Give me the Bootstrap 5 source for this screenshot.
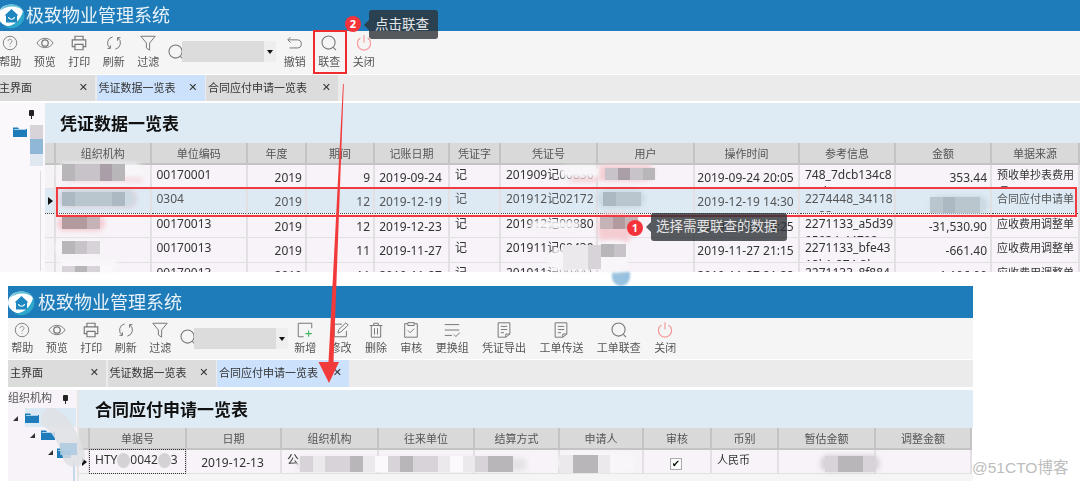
<!DOCTYPE html>
<html lang="zh-CN">
<head>
<meta charset="utf-8">
<title>极致物业管理系统</title>
<link href="https://cdn.jsdelivr.net/npm/bootstrap@5.3.0/dist/css/bootstrap.min.css" rel="stylesheet">
<style>
html,body{margin:0;height:486px;overflow:hidden;background:#fff}
body{font-family:"Noto Sans","Noto Sans CJK SC",sans-serif;font-size:11px;color:#333;position:relative}
.win{position:absolute;overflow:hidden;background:#fff;filter:blur(.35px)}
.win-a{left:-3px;top:0;width:1083px;height:272px}
.win-b{left:8px;top:286px;width:965px;height:195px}
.ttl{height:32px;background:#1e7cba;color:#e8f2f8;font-size:18px;padding-left:3px;gap:1px}
.win-b .ttl{padding-left:0;gap:3px}
.logo{width:27px;height:27px;flex:none}
.win-a .ttl{height:31px}
.win-a .logo{margin-left:-2px}
.tb{height:43px;background:#f5f5f5;margin-bottom:1px}
.win-a .tb{padding-left:0}
.win-a .tb>:first-child{margin-left:-4px}
.win-b .tb>:first-child{margin-left:-3px}
.win-b .tb{height:41px}
.ti{width:34.5px;flex:none;padding-top:3px;color:#555;line-height:14px;white-space:nowrap}
.ti svg{width:18px;height:18px;display:block;margin-bottom:3px}
.win-b .ti svg{margin-bottom:2px}
.tw{width:auto;padding-left:6.7px;padding-right:6.7px}
.ts{width:18px;height:18px;margin:12px -3px 0 1px;flex:none}
.win-b .ts{margin-top:10px}
.cb{width:94px;height:21px;background:#dcdcdc;margin:10px 2px 0 0;flex:none;justify-content:flex-end}
.win-b .cb{margin-right:0}
.cba{width:12px;background:#eee;color:#111}
.cba::before{content:"";border:3.5px solid transparent;border-top:4px solid #111;border-bottom:0}
.tabs{height:26px;background:#ebebeb;margin-bottom:2px;gap:1.5px}
.win-b .tabs{height:27px;margin-bottom:3px}
.tab1{background:#dcdcdc;height:100%;padding:0 7px 0 2px;color:#333}
.w1{width:98px}.w2{width:108px}.w3{width:132px}
.tab1.on{background:#cce1fb}
.xx{font-weight:700;font-size:11px;color:#333;font-family:"DejaVu Sans",sans-serif}
.bdy{height:170px}
.sd{width:48px;flex:none;background:#faf8fa;position:relative}
.win-b .sd{width:71px;background:#f7f3f8;border-right:2px solid #e6e6e6}
.mn{flex:1;min-width:0}
.hd{height:40px;background:#deebf5;color:#111;font-size:17px;font-weight:700;padding-left:15px;line-height:1}
.win-b .hd{height:38px;padding-left:16px}
.gt{table-layout:fixed;border-collapse:collapse;--bs-table-bg:transparent;width:auto}
.gt th{background:#d9d9d9;font-weight:400;color:#555;text-align:center;font-size:11px;height:21px;padding:0;border:1px solid #c3c3c3;border-width:0 2px 2px 0;line-height:19px;overflow:hidden}
.gt td{background:#f7f3f8;color:#333;padding:0;height:24.5px;border:1px solid #e2e0e2;border-width:0 2px 1.5px 0;overflow:hidden;vertical-align:top;font-size:12px}
.gt .rh{background:#f5f3f6;position:relative}
.gt tr.sel td{background:#ddeaf4;color:#555;border-bottom:1px dotted #444}
.ct{height:23px;overflow:hidden;padding:1px 0 0 5px;line-height:17px;white-space:normal;word-break:break-all}
.ctr{padding:4px 2px 0 0;text-align:center;line-height:17px;white-space:nowrap}
.num{padding:4px 3px 0 0;text-align:right;line-height:17px;white-space:nowrap}
.cjk{font-size:11px}
.gt-a col:nth-child(1){width:10px}.gt-a col:nth-child(2){width:95.5px}.gt-a col:nth-child(3){width:96.5px}
.gt-a col:nth-child(4){width:59px}.gt-a col:nth-child(5){width:68px}.gt-a col:nth-child(6){width:75px}
.gt-a col:nth-child(7){width:51px}.gt-a col:nth-child(8){width:97px}.gt-a col:nth-child(9){width:97px}
.gt-a col:nth-child(10){width:105px}.gt-a col:nth-child(11){width:96px}.gt-a col:nth-child(12){width:96px}.gt-a col:nth-child(13){width:88px}
.gt-b col:nth-child(1){width:10px}.gt-b col:nth-child(2){width:97px}.gt-b col:nth-child(3){width:95px}
.gt-b col:nth-child(4){width:97px}.gt-b col:nth-child(5){width:96px}.gt-b col:nth-child(6){width:85px}
.gt-b col:nth-child(7){width:84px}.gt-b col:nth-child(8){width:68px}.gt-b col:nth-child(9){width:67px}
.gt-b col:nth-child(10){width:97px}.gt-b col:nth-child(11){width:96px}
.ptr{position:absolute;left:3px;top:8px;border:4px solid transparent;border-left:5px solid #111;border-right:0}
.dots{outline:1px dotted #333;outline-offset:-1px}
.chk{width:12px;height:12px;border:1px solid #aaa;background:#fff;color:#111;font-size:10px;line-height:10px;display:inline-block;font-family:"DejaVu Sans",sans-serif}
.strip{height:7px;background:#f5f5f5}
.pin{position:absolute;width:5px;height:6px;background:#222;border-radius:1px}
.pin::after{content:"";position:absolute;left:2px;top:6px;width:1px;height:3px;background:#222}
.pa{left:32px;top:7px}
.pb{left:55px;top:5px}
.sdl{position:absolute;left:0;top:0;white-space:nowrap;color:#555;font-size:11px;line-height:15px}
.fold{position:absolute;width:14px;height:11px}
.fa{left:16px;top:23px}
.tri{position:absolute;border-style:solid;border-width:0 0 5px 5px;border-color:transparent transparent #333 transparent}
.t1{left:5px;top:26px}.t2{left:22px;top:43px}.t3{left:40px;top:60px}
.f1{left:17px;top:22px}.f2{left:33px;top:39px}.f3{left:49px;top:57px}
.trsel{position:absolute;left:17px;top:18px;width:51px;height:19px;background:#dbe9f5}
.sline{position:absolute;left:43px;top:68px;width:1px;height:100px;background:#ddd}
.sline2{position:absolute;left:65px;top:70px;width:2px;height:30px;background:#c5d8e8}
.mos{position:absolute;display:flex;z-index:3;filter:blur(.7px)}
.mos i{display:block;height:100%;width:12.5px;flex:none}
.halo{position:absolute;border-radius:10px;filter:blur(2px);z-index:2}
.g1{background:#b9b6b9}.g2{background:#c8c2c9}.g3{background:#aa9fa9}.g4{background:#d7d3d8}
.g5{background:#adb9c2}.g6{background:#bac6ce}.g7{background:#b39a9f}.g8{background:#c6b3b8}
.g9{background:#ece9ed}.g10{background:#8fb8d6}.g11{background:#c8dceb}.g12{background:#dfe8f0}
.wm{background:#f8f6f9}.pk{background:#f4cdd3}.wt{background:#fbf9fb}.bl{background:#cbd9e3}
.m1{left:62px;top:164px;height:17px}.h1{left:57px;top:163px;width:87px;height:19px}
.h1b{left:64px;top:178px;width:78px;height:3px}
.m2{left:62px;top:192px;height:14px}.h2{left:60px;top:190px;width:76px;height:17px}
.m3{left:62px;top:217px;height:12px}.h3{left:57px;top:216px;width:48px;height:15px}
.m4{left:62px;top:241px;height:13px}.h4{left:55px;top:240px;width:48px;height:15px}
.m5{left:62px;top:266px;height:6px}.h5{left:58px;top:258px;width:60px;height:14px}
.m6{left:605px;top:168px;height:12px}.h6{left:596px;top:165px;width:58px;height:16px}.h6b{left:560px;top:166px;width:40px;height:12px}
.h6c{left:570px;top:178px;width:28px;height:4px}
.m7{left:603px;top:192px;height:14px}.h7{left:597px;top:190px;width:48px;height:18px}
.m8{left:600px;top:217px;height:12px}.h8{left:598px;top:213px;width:34px;height:30px}
.h8b{left:530px;top:221px;width:50px;height:8px}
.m9{left:601px;top:244px;height:13px}.h9{left:598px;top:240px;width:30px;height:32px}
.h9b{left:548px;top:250px;width:50px;height:22px}.m9b{left:563px;top:245px;height:24px}
.m10{left:930px;top:197px;height:16px}.h10{left:930px;top:196px;width:58px;height:18px}
.m11{left:30px;top:125px;height:14px}.m12{left:30px;top:139px;height:15px}.m13{left:30px;top:154px;height:12px}
.h15{left:297px;top:458px;width:230px;height:13px;background:#e6e3e7}
.m15{left:300px;top:456px;height:16px}
.m16{left:560px;top:455px;height:18px}.h16{left:558px;top:453px;width:78px;height:19px}
.m17{left:825px;top:456px;height:16px}.h17{left:820px;top:455px;width:60px;height:17px}
.tear{position:absolute;left:612px;top:272px;width:18px;height:14px;background:#98c2e0;border-radius:0 0 9px 9px;filter:blur(1px)}
.hy{display:inline-block;width:13px;height:15px;border-radius:50%;background:#d5d2d6;vertical-align:middle}
.rbx{position:absolute;border:2px solid #f03a3f;z-index:6}
.r1{left:56px;top:187px;width:1021px;height:30px}
.r2{left:313px;top:30px;width:34px;height:44px;border-width:2.5px;border-color:#ee2c2c}
.tip{position:absolute;background:rgba(45,50,55,.8);color:#e6e6e6;font-size:13.5px;border-radius:3px;z-index:7;line-height:1;white-space:nowrap}
.tip::before{content:"";position:absolute;left:-5px;top:50%;margin-top:-5px;border:5px solid transparent;border-right-color:rgba(45,50,55,.8);border-left:0}
.tp1{left:651px;top:213px;width:136px;height:28px;padding-left:5px}
.tp2{left:369px;top:10px;width:69px;height:29px;padding-left:6px}
.bdg{position:absolute;width:16px;height:16px;border-radius:50%;background:#f4333a;color:#fff;font-size:11px;font-weight:700;line-height:16px;text-align:center;z-index:8}
.bd1{left:627px;top:220px}.bd2{left:345px;top:16px}
.arw{position:absolute;left:0;top:0;width:1080px;height:486px;z-index:5;pointer-events:none}
.mark51{position:absolute;left:972px;top:457px;color:#bdbdbd;font-size:15.5px;font-family:"Liberation Sans","Noto Sans CJK SC",sans-serif;white-space:nowrap;line-height:22px;z-index:9}
</style>
</head>
<body>
<svg width="0" height="0" class="position-absolute">
<defs>
<symbol id="ic-help" viewBox="0 0 20 20"><circle cx="10" cy="10" r="7.500" fill="none" stroke="#777" stroke-width="1"/><path d="M7.800 8a2.200 2.200 0 1 1 3.300 1.900c-.8.500-1.100.9-1.100 1.800M10 13.400v1" fill="none" stroke="#888" stroke-width="1"/></symbol>
<symbol id="ic-eye" viewBox="0 0 20 20"><path d="M1 10c2.500-3.800 5.500-5.200 9-5.200s6.500 1.400 9 5.200c-2.500 3.800-5.500 5.200-9 5.200S3.500 13.800 1 10z" fill="none" stroke="#777"/><circle cx="10" cy="10" r="3.600" fill="none" stroke="#777" stroke-width="1.400"/></symbol>
<symbol id="ic-print" viewBox="0 0 20 20"><path d="M5.500 6V2.500h9V6M5.500 14H2.500V6.500h15V14h-3M5.500 11.500h9v6h-9z" fill="none" stroke="#777" stroke-width="1.300"/></symbol>
<symbol id="ic-refresh" viewBox="0 0 20 20"><path d="M8.500 3.200A7 7 0 0 0 5.800 15.800M11.500 16.800A7 7 0 0 0 14.200 4.200M6 12.500v3.500H2.800M14 7.500V4h3.200" fill="none" stroke="#777" stroke-width="1.100"/></symbol>
<symbol id="ic-filter" viewBox="0 0 20 20"><path d="M2 2.500h16l-6.200 7.500v8l-3.600-2.500V10z" fill="none" stroke="#777" stroke-width="1.100"/></symbol>
<symbol id="ic-search" viewBox="0 0 20 20"><circle cx="9.500" cy="9.500" r="7.300" fill="none" stroke="#777" stroke-width="1.200"/><path d="M14.800 14.800l3 3" stroke="#777" stroke-width="1.200"/></symbol>
<symbol id="ic-undo" viewBox="0 0 20 20"><path d="M5 3.500 2 6.500l3 3M2.500 6.500h10a4.500 4.500 0 0 1 0 9H4" fill="none" stroke="#777" stroke-width="1.100"/></symbol>
<symbol id="ic-power" viewBox="0 0 20 20"><path d="M6 4.500a7.300 7.300 0 1 0 8 0M10 1.500v8" fill="none" stroke="#f79a9a" stroke-width="1.300"/></symbol>
<symbol id="ic-new" viewBox="0 0 20 20"><path d="M17.500 8V2.500h-15v15h6" fill="none" stroke="#777" stroke-width="1.100"/><path d="M14 10.500v7M10.500 14h7" stroke="#3fb45b" stroke-width="1.200"/></symbol>
<symbol id="ic-edit" viewBox="0 0 20 20"><path d="M16 11v6.500H2.500V3.500H11" fill="none" stroke="#777" stroke-width="1.100"/><path d="M6.500 13.500l1-4L15.500 2l2.500 2.500-8 7.500z" fill="none" stroke="#777" stroke-width="1.100"/></symbol>
<symbol id="ic-trash" viewBox="0 0 20 20"><path d="M3 5h14M7.500 5V2.500h5V5M4.800 5v13h10.400V5M8.300 8v7M11.700 8v7" fill="none" stroke="#777" stroke-width="1.100"/></symbol>
<symbol id="ic-audit" viewBox="0 0 20 20"><path d="M6.500 3H3v15h14V3h-3.500M6.500 1.800h7V5h-7z" fill="none" stroke="#777" stroke-width="1.100"/><path d="M6.500 10.500l2.500 2.500 4.500-4.500" fill="none" stroke="#777" stroke-width="1.100"/></symbol>
<symbol id="ic-list" viewBox="0 0 20 20"><path d="M2 4h16M2 10h16M2 16h8" fill="none" stroke="#777" stroke-width="1.100"/><path d="M12 15l2.300 2.300L18.500 13" fill="none" stroke="#777" stroke-width="1.100"/></symbol>
<symbol id="ic-doc" viewBox="0 0 20 20"><path d="M12 18H3.500V2h13v12.500zM12 18v-3.500h4.500M6.500 6h7M6.500 9.500h7M6.500 13H10" fill="none" stroke="#777" stroke-width="1.100"/></symbol>
<symbol id="ic-logo" viewBox="0 0 27 27"><ellipse cx="13" cy="13.500" rx="13" ry="11" fill="#fff"/><path d="M2 9C6 1 19 -1 26 9 20 3 8 3 2 9z" fill="#5fc0d8"/><path d="M25 9c3 5 1 10-3 14-7 5-13 3-17 1 8 2 17-4 20-15z" fill="#2ea7cb"/><path d="M6.500 13.500 13.500 7l7 6.500h-1.500v7H8v-7z" fill="#1f87c0"/><path d="M10.500 15c.5 3 5.500 3 6 0" fill="none" stroke="#fff" stroke-width="1.100"/></symbol>
<symbol id="ic-folder" viewBox="0 0 14 11"><path d="M0 1.500h5l1 1.500h8v8H0z" fill="#1e7cba"/><path d="M1 3.500h12" stroke="#a9d0ea"/></symbol>
</defs>
</svg>

<div class="win win-a">
  <div class="ttl d-flex align-items-center"><svg class="logo"><use href="#ic-logo"/></svg><span>极致物业管理系统</span></div>
  <div class="tb d-flex">
    <div class="ti d-flex flex-column align-items-center"><svg><use href="#ic-help"/></svg>帮助</div>
    <div class="ti d-flex flex-column align-items-center"><svg><use href="#ic-eye"/></svg>预览</div>
    <div class="ti d-flex flex-column align-items-center"><svg><use href="#ic-print"/></svg>打印</div>
    <div class="ti d-flex flex-column align-items-center"><svg><use href="#ic-refresh"/></svg>刷新</div>
    <div class="ti d-flex flex-column align-items-center"><svg><use href="#ic-filter"/></svg>过滤</div>
    <svg class="ts"><use href="#ic-search"/></svg>
    <div class="cb d-flex"><span class="cba d-flex align-items-center justify-content-center"></span></div>
    <div class="ti d-flex flex-column align-items-center"><svg><use href="#ic-undo"/></svg>撤销</div>
    <div class="ti d-flex flex-column align-items-center"><svg><use href="#ic-search"/></svg>联查</div>
    <div class="ti d-flex flex-column align-items-center"><svg><use href="#ic-power"/></svg>关闭</div>
  </div>
  <div class="tabs d-flex">
    <div class="tab1 w1 d-flex align-items-center justify-content-between"><span>主界面</span><span class="xx">✕</span></div>
    <div class="tab1 w2 on d-flex align-items-center justify-content-between"><span>凭证数据一览表</span><span class="xx">✕</span></div>
    <div class="tab1 w3 d-flex align-items-center justify-content-between"><span>合同应付申请一览表</span><span class="xx">✕</span></div>
  </div>
  <div class="bdy d-flex">
    <div class="sd"><span class="pin pa"></span><svg class="fold fa"><use href="#ic-folder"/></svg><span class="sline"></span></div>
    <div class="mn">
      <div class="hd d-flex align-items-center"><span>凭证数据一览表</span></div>
      <table class="table gt gt-a mb-0">
        <colgroup><col><col><col><col><col><col><col><col><col><col><col><col><col></colgroup>
        <thead><tr><th></th><th>组织机构</th><th>单位编码</th><th>年度</th><th>期间</th><th>记账日期</th><th>凭证字</th><th>凭证号</th><th>用户</th><th>操作时间</th><th>参考信息</th><th>金额</th><th>单据来源</th></tr></thead>
        <tbody>
          <tr><td class="rh"></td><td></td><td><div class="ct">00170001</div></td><td><div class="num">2019</div></td><td><div class="num">9</div></td><td><div class="ctr">2019-09-24</div></td><td><div class="ct">记</div></td><td><div class="ct">201909记00836</div></td><td></td><td><div class="ctr">2019-09-24 20:05</div></td><td><div class="ct">748_7dcb134c8 2--d46-48442</div></td><td><div class="num">353.44</div></td><td><div class="ct cjk">预收单抄表费用项目</div></td></tr>
          <tr class="sel"><td class="rh"><span class="ptr"></span></td><td></td><td><div class="ct">0304</div></td><td><div class="num">2019</div></td><td><div class="num">12</div></td><td><div class="ctr">2019-12-19</div></td><td><div class="ct">记</div></td><td><div class="ct">201912记02172</div></td><td></td><td><div class="ctr">2019-12-19 14:30</div></td><td><div class="ct">2274448_34118 --c88</div></td><td></td><td><div class="ct cjk">合同应付申请单</div></td></tr>
          <tr><td class="rh"></td><td></td><td><div class="ct">00170013</div></td><td><div class="num">2019</div></td><td><div class="num">12</div></td><td><div class="ctr">2019-12-23</div></td><td><div class="ct">记</div></td><td><div class="ct">201912记00880</div></td><td></td><td><div class="ctr">2019-12-23 16:25</div></td><td><div class="ct">2271133_a5d39 95034-44702</div></td><td><div class="num">-31,530.90</div></td><td><div class="ct cjk">应收费用调整单</div></td></tr>
          <tr><td class="rh"></td><td></td><td><div class="ct">00170013</div></td><td><div class="num">2019</div></td><td><div class="num">11</div></td><td><div class="ctr">2019-11-27</div></td><td><div class="ct">记</div></td><td><div class="ct">201911记00439</div></td><td></td><td><div class="ctr">2019-11-27 21:15</div></td><td><div class="ct">2271133_bfe43 18k1-874-3l</div></td><td><div class="num">-661.40</div></td><td><div class="ct cjk">应收费用调整单</div></td></tr>
          <tr><td class="rh"></td><td></td><td><div class="ct">00170013</div></td><td><div class="num">2019</div></td><td><div class="num">11</div></td><td><div class="ctr">2019-11-27</div></td><td><div class="ct">记</div></td><td><div class="ct">201911记00441</div></td><td></td><td><div class="ctr">2019-11-27 21:28</div></td><td><div class="ct">2271133_8f884</div></td><td><div class="num">-1,106.00</div></td><td><div class="ct cjk">应收费用调整单</div></td></tr>
        </tbody>
      </table>
    </div>
  </div>
</div>

<span class="halo h1 wm"></span><span class="halo h1b pk"></span><div class="mos m1"><i class="g1"></i><i class="g2"></i><i class="g2"></i><i class="g3"></i><i class="g1"></i></div>
<span class="halo h2 pk"></span><span class="halo h2 bl"></span><div class="mos m2"><i class="g5"></i><i class="g6"></i><i class="g6"></i><i class="g6"></i><i class="g5"></i></div>
<span class="halo h3 pk"></span><div class="mos m3"><i class="g7"></i><i class="g7"></i><i class="g8"></i></div>
<span class="halo h4 wm"></span><div class="mos m4"><i class="g1"></i><i class="g2"></i><i class="g4"></i></div>
<span class="halo h5 wm"></span><div class="mos m5"><i class="g4"></i><i class="g1"></i><i class="g4"></i><i class="wt"></i></div>
<span class="halo h6 pk"></span><span class="halo h6b wm"></span><span class="halo h6c pk"></span><div class="mos m6"><i class="g2"></i><i class="g3"></i><i class="g2"></i><i class="g1"></i></div>
<span class="halo h7 bl"></span><div class="mos m7"><i class="g5"></i><i class="g6"></i><i class="g6"></i></div>
<span class="halo h8 pk"></span><span class="halo h8b wm"></span><div class="mos m8"><i class="g8"></i><i class="g7"></i><i class="g8"></i></div>
<span class="halo h9 wm"></span><span class="halo h9b wm"></span><div class="mos m9"><i class="g1"></i><i class="g2"></i></div>
<div class="mos m9b"><i class="g9"></i><i class="g9"></i><i class="g4"></i></div>
<span class="halo h10 bl"></span><div class="mos m10"><i class="g6"></i><i class="g5"></i><i class="g6"></i><i class="g6"></i></div>
<div class="mos m11"><i class="g4"></i></div><div class="mos m12"><i class="g10"></i></div><div class="mos m13"><i class="g12"></i></div>
<span class="tear"></span>

<div class="win win-b">
  <div class="ttl d-flex align-items-center"><svg class="logo"><use href="#ic-logo"/></svg><span>极致物业管理系统</span></div>
  <div class="tb d-flex">
    <div class="ti d-flex flex-column align-items-center"><svg><use href="#ic-help"/></svg>帮助</div>
    <div class="ti d-flex flex-column align-items-center"><svg><use href="#ic-eye"/></svg>预览</div>
    <div class="ti d-flex flex-column align-items-center"><svg><use href="#ic-print"/></svg>打印</div>
    <div class="ti d-flex flex-column align-items-center"><svg><use href="#ic-refresh"/></svg>刷新</div>
    <div class="ti d-flex flex-column align-items-center"><svg><use href="#ic-filter"/></svg>过滤</div>
    <svg class="ts"><use href="#ic-search"/></svg>
    <div class="cb d-flex"><span class="cba d-flex align-items-center justify-content-center"></span></div>
    <div class="ti tw d-flex flex-column align-items-center"><svg><use href="#ic-new"/></svg>新增</div>
    <div class="ti tw d-flex flex-column align-items-center"><svg><use href="#ic-edit"/></svg>修改</div>
    <div class="ti tw d-flex flex-column align-items-center"><svg><use href="#ic-trash"/></svg>删除</div>
    <div class="ti tw d-flex flex-column align-items-center"><svg><use href="#ic-audit"/></svg>审核</div>
    <div class="ti tw d-flex flex-column align-items-center"><svg><use href="#ic-list"/></svg>更换组</div>
    <div class="ti tw d-flex flex-column align-items-center"><svg><use href="#ic-doc"/></svg>凭证导出</div>
    <div class="ti tw d-flex flex-column align-items-center"><svg><use href="#ic-doc"/></svg>工单传送</div>
    <div class="ti tw d-flex flex-column align-items-center"><svg><use href="#ic-search"/></svg>工单联查</div>
    <div class="ti tw d-flex flex-column align-items-center"><svg><use href="#ic-power"/></svg>关闭</div>
  </div>
  <div class="tabs d-flex">
    <div class="tab1 w1 d-flex align-items-center justify-content-between"><span>主界面</span><span class="xx">✕</span></div>
    <div class="tab1 w2 d-flex align-items-center justify-content-between"><span>凭证数据一览表</span><span class="xx">✕</span></div>
    <div class="tab1 w3 on d-flex align-items-center justify-content-between"><span>合同应付申请一览表</span><span class="xx">✕</span></div>
  </div>
  <div class="bdy d-flex">
    <div class="sd">
      <span class="sdl">组织机构</span><span class="pin pb"></span>
      <span class="trsel"></span>
      <span class="tri t1"></span><svg class="fold f1"><use href="#ic-folder"/></svg>
      <span class="tri t2"></span><svg class="fold f2"><use href="#ic-folder"/></svg>
      <span class="tri t3"></span><svg class="fold f3"><use href="#ic-folder"/></svg>
      <span class="sline2"></span>
    </div>
    <div class="mn">
      <div class="hd d-flex align-items-center"><span>合同应付申请一览表</span></div>
      <table class="table gt gt-b mb-0">
        <colgroup><col><col><col><col><col><col><col><col><col><col><col></colgroup>
        <thead><tr><th></th><th>单据号</th><th>日期</th><th>组织机构</th><th>往来单位</th><th>结算方式</th><th>申请人</th><th>审核</th><th>币别</th><th>暂估金额</th><th>调整金额</th></tr></thead>
        <tbody>
          <tr><td class="rh"><span class="ptr"></span></td><td class="dots"><div class="ct">HTY<span class="hy"></span>0042<span class="hy"></span>3</div></td><td><div class="ctr">2019-12-13</div></td><td><div class="ct">公</div></td><td><div class="ct"></div></td><td><div class="ct"></div></td><td></td><td><div class="ctr"><span class="chk">✔</span></div></td><td><div class="ct cjk">人民币</div></td><td></td><td></td></tr>
        </tbody>
      </table>
      <div class="strip"></div>
    </div>
  </div>
</div>

<span class="halo h15"></span>
<div class="mos m15"><i class="g4"></i><i class="g9"></i><i class="g4"></i><i class="g4"></i><i class="g1"></i><i class="g9"></i><i class="wt"></i><i class="g4"></i><i class="g1"></i><i class="g4"></i><i class="g4"></i><i class="g9"></i><i class="wt"></i><i class="g9"></i><i class="g4"></i><i class="g1"></i><i class="g1"></i></div>
<span class="halo h16 wm"></span><div class="mos m16"><i class="g9"></i><i class="g1"></i><i class="g1"></i><i class="g9"></i></div>
<span class="halo h17 g4"></span><div class="mos m17"><i class="g4"></i><i class="g1"></i><i class="g1"></i><i class="g4"></i></div>

<svg class="arw" viewBox="0 0 1080 486">
  <path d="M52 419C62 425 70 442 74 456" fill="none" stroke="#dfe0e4" stroke-opacity=".85" stroke-width="22" stroke-linecap="round"/>
  <path d="M60 443h17v12H60z" fill="#a9c8e0" fill-opacity=".8"/>
  <polygon points="343,84 343.800,84 333.500,362 339,362 329,383 318.500,362 328.500,362" fill="#f23a3a"/>
</svg>
<span class="rbx r1"></span>
<span class="rbx r2"></span>
<div class="tip tp1 d-flex align-items-center">选择需要联查的数据</div>
<div class="tip tp2 d-flex align-items-center">点击联查</div>
<span class="bdg bd1">1</span>
<span class="bdg bd2">2</span>
<div class="mark51">@51CTO博客</div>

<script src="https://cdn.jsdelivr.net/npm/bootstrap@5.3.0/dist/js/bootstrap.bundle.min.js"></script>
</body>
</html>
